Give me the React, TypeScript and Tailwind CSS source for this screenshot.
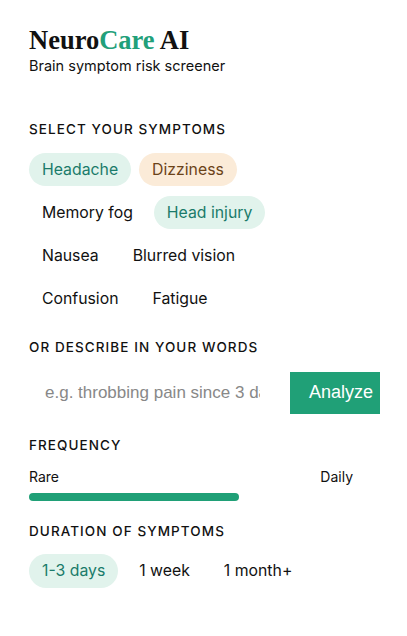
import { useState } from "react"

const symptoms = [
  "Headache",
  "Dizziness",
  "Memory fog",
  "Head injury",
  "Nausea",
  "Blurred vision",
  "Confusion",
  "Fatigue",
]

const durations = ["1-3 days", "1 week", "1 month+"]

function Label({ children }: { children: React.ReactNode }) {
  return (
    <h2 className="text-[13.5px] font-medium tracking-[0.08em] text-[#111] uppercase">
      {children}
    </h2>
  )
}

export default function App() {
  // Dizziness shows in amber, the others in mint
  const [selected, setSelected] = useState<string[]>(["Headache", "Dizziness", "Head injury"])
  const [duration, setDuration] = useState("1-3 days")
  const [text, setText] = useState("")

  const toggle = (s: string) =>
    setSelected((prev) => (prev.includes(s) ? prev.filter((x) => x !== s) : [...prev, s]))

  return (
    <main
      className="min-h-screen bg-white px-[29px] pt-[24px] text-[#111]"
      style={{ fontFamily: "Inter, 'Noto Sans', sans-serif" }}
    >
      <h1
        className="text-[26.5px] font-bold leading-[32px] text-[#111]"
        style={{ fontFamily: "'Liberation Serif', 'DejaVu Serif', serif" }}
      >
        Neuro<span className="text-[#22a07a]">Care</span> AI
      </h1>
      <p className="mt-[1px] text-[14.5px] leading-[18px]">Brain symptom risk screener</p>

      <div className="mt-[44px]">
        <Label>Select your symptoms</Label>
        <div className="mt-[14px] flex w-[270px] flex-wrap gap-x-[8px] gap-y-[10px]">
          {symptoms.map((s) => {
            const on = selected.includes(s)
            const amber = s === "Dizziness"
            return (
              <button
                key={s}
                onClick={() => toggle(s)}
                className={
                  "h-[33px] rounded-full px-[13px] text-[15.8px] " +
                  (on
                    ? amber
                      ? "bg-[#fbebd8] text-[#6b4318]"
                      : "bg-[#e1f3ec] text-[#1a7b6a]"
                    : "bg-transparent text-[#111]")
                }
              >
                {s}
              </button>
            )
          })}
        </div>
      </div>

      <div className="mt-[22px]">
        <Label>Or describe in your words</Label>
        <div className="mt-[14px] flex h-[42px] w-[351px] gap-[14px]">
          <input
            value={text}
            onChange={(e) => setText(e.target.value)}
            placeholder="e.g. throbbing pain since 3 days"
            className="min-w-0 flex-1 bg-white px-[16px] text-[17px] text-[#111] placeholder:text-[#888] outline-none"
            style={{ fontFamily: "'Liberation Sans', Arial, sans-serif" }}
          />
          <button
            className="w-[90px] bg-[#20a077] pl-[19px] text-left text-[18px] text-white"
            style={{ fontFamily: "'Liberation Sans', Arial, sans-serif" }}
          >
            Analyze
          </button>
        </div>
      </div>

      <div className="mt-[21px]">
        <Label>Frequency</Label>
        <div className="mt-[13px] flex w-[324px] justify-between text-[14px] leading-[18px]">
          <span>Rare</span>
          <span>Daily</span>
        </div>
        <div className="mt-[7px] h-[8px] w-[210px] rounded-full bg-[#20a077]" />
      </div>

      <div className="mt-[20px]">
        <Label>Duration of symptoms</Label>
        <div className="mt-[13px] flex gap-x-[8px]">
          {durations.map((d) => (
            <button
              key={d}
              onClick={() => setDuration(d)}
              className={
                "h-[34px] rounded-full px-[13px] text-[15.8px] " +
                (duration === d ? "bg-[#e1f3ec] text-[#1a7b6a]" : "text-[#111]")
              }
            >
              {d}
            </button>
          ))}
        </div>
      </div>
    </main>
  )
}
